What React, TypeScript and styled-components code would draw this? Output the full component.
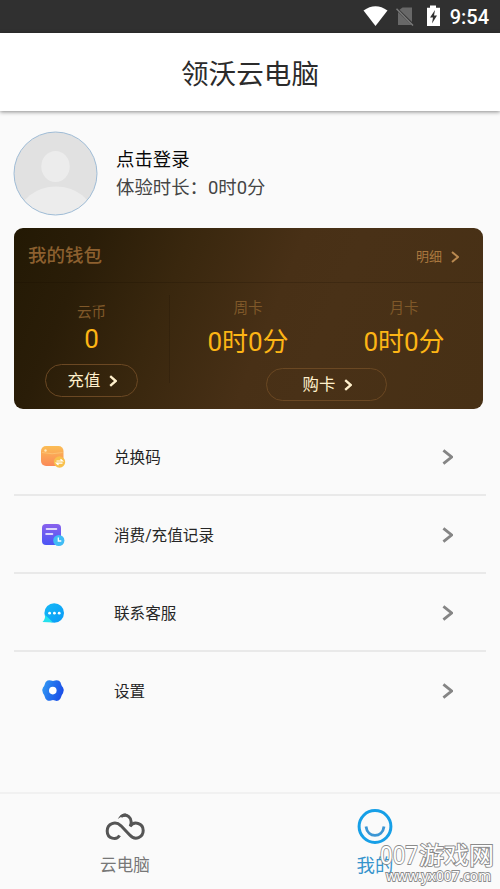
import React from "react";
import styled, { createGlobalStyle } from "styled-components";

const GlobalStyle = createGlobalStyle`
  * { box-sizing: border-box; }
  body { margin: 0; background: #fafafa; }
`;

const Screen = styled.div`
  width: 500px;
  height: 889px;
  display: flex;
  flex-direction: column;
  position: relative;
  overflow: hidden;
  background: #fafafa;
  color: #222;
  font-family: Roboto, "Noto Sans CJK SC", sans-serif;
  svg { display: block; flex: none; }
`;

const StatusBar = styled.div`
  height: 33px;
  flex: none;
  display: flex;
  align-items: center;
  justify-content: flex-end;
  padding-right: 11px;
  background: #303030;
  color: #fff;
`;

const Clock = styled.span`
  font-size: 20px;
  line-height: 33px;
  font-weight: 500;
  padding-top: 2px;
  margin-left: 10px;
`;

const TitleBar = styled.header`
  height: 78px;
  flex: none;
  background: #fff;
  box-shadow: 0 1px 4px rgba(0, 0, 0, 0.45);
  text-align: center;
  font-size: 27.6px;
  line-height: 83px;
  color: #2b2b2b;
  z-index: 1;
`;

const Profile = styled.section`
  height: 117px;
  flex: none;
  display: flex;
  align-items: center;
  gap: 18px;
  padding: 8px 14px 0 13px;
`;

const ProfileText = styled.div`
  display: flex;
  flex-direction: column;
`;

const ProfileLine = styled.span<{ $muted?: boolean }>`
  font-size: 18.4px;
  line-height: 28px;
  color: ${(p) => (p.$muted ? "#454545" : "#080808")};
`;

const Wallet = styled.section`
  width: 469px;
  height: 181px;
  flex: none;
  margin-left: 14px;
  border-radius: 9px;
  background: linear-gradient(112deg, #231904 0%, #2a1d08 15%, #39270e 33%, #483016 54%, #493117 65%, #473015 100%);
  overflow: hidden;
`;

const WalletHeader = styled.div`
  height: 55px;
  display: flex;
  align-items: center;
  justify-content: space-between;
  padding: 1px 24px 0 14px;
  border-bottom: 1px solid rgba(20, 10, 0, 0.2);
`;

const WalletTitle = styled.h2`
  margin: 0;
  font-size: 18.5px;
  line-height: 28px;
  font-weight: 500;
  color: #8c602f;
`;

const DetailLink = styled.a`
  display: flex;
  align-items: center;
  gap: 9px;
  padding-top: 2px;
  font-size: 13px;
  line-height: 20px;
  color: #a9773e;
`;

const WalletBody = styled.div`
  height: 126px;
  display: grid;
  grid-template-columns: 156px 313px;
`;

const CoinSide = styled.div`
  display: flex;
  flex-direction: column;
  align-items: center;
  padding: 18px 1px 0 0;
  background: linear-gradient(rgba(20, 10, 0, 0.2), rgba(20, 10, 0, 0.2)) right 12px / 1px 88px no-repeat;
`;

const CardSide = styled.div`
  display: flex;
  flex-direction: column;
  align-items: center;
  padding-top: 14px;
`;

const CardPair = styled.div`
  width: 312px;
  align-self: flex-start;
  display: grid;
  grid-template-columns: 1fr 1fr;
`;

const Stat = styled.div`
  display: flex;
  flex-direction: column;
  align-items: center;
`;

const StatLabel = styled.span`
  font-size: 14.6px;
  line-height: 22px;
  color: #7f5829;
`;

const StatValue = styled.span<{ $tall?: boolean }>`
  font-size: 26px;
  line-height: ${(p) => (p.$tall ? 46 : 33)}px;
  color: #fdb515;
`;

const PillButton = styled.button<{ $width: number; $top: number }>`
  width: ${(p) => p.$width}px;
  height: 33px;
  margin: ${(p) => p.$top}px 0 0;
  padding: 1px 0 0 2px;
  display: flex;
  align-items: center;
  justify-content: center;
  gap: 9px;
  border: 1px solid #6b4823;
  border-radius: 17px;
  background: transparent;
  color: #fff0cc;
  font: inherit;
  font-size: 16.4px;
  line-height: 24px;
`;

const Menu = styled.nav`
  flex: 1;
  padding: 9px 14px 0;
`;

const MenuRow = styled.div<{ $last?: boolean }>`
  height: 78px;
  display: grid;
  grid-template-columns: 100px 1fr 11px;
  align-items: center;
  padding: 1px 33px 0 0;
  border-bottom: 2px solid ${(p) => (p.$last ? "transparent" : "#e9e9e9")};
  font-size: 15.6px;
  line-height: 24px;
  color: #262626;
`;

const MenuLabel = styled.span`
  padding-top: 3px;
`;

const IconCell = styled.span`
  padding-left: 26px;
`;

const TabBar = styled.footer`
  height: 97px;
  flex: none;
  display: grid;
  grid-template-columns: 1fr 1fr;
  border-top: 2px solid #f1f1f1;
`;

const Tab = styled.div<{ $active?: boolean }>`
  display: flex;
  flex-direction: column;
  align-items: center;
  padding-top: 13px;
  font-size: ${(p) => (p.$active ? 18.4 : 16.6)}px;
  line-height: 24px;
  color: ${(p) => (p.$active ? "#3593cc" : "#777")};
`;

const TabIcon = styled.span`
  height: 40px;
  display: flex;
  align-items: center;
  margin-bottom: 7px;
`;

const Watermark = styled.svg`
  position: absolute;
  left: 370px;
  top: 836px;
`;

function Chevron({ w, h, color, stroke }: { w: number; h: number; color: string; stroke: number }) {
  const m = stroke / 2;
  return (
    <svg width={w} height={h}>
      <path d={`M${m} ${m}L${w - m} ${h / 2}L${m} ${h - m}`} fill="none" stroke={color} strokeWidth={stroke} />
    </svg>
  );
}

function StatusIcons() {
  return (
    <svg width="80" height="33" viewBox="360 0 80 33">
      <path d="M363.5 10.5Q375.5 2 387.5 10.5L375.5 26Z" fill="#fff" />
      <path d="M402.5 7.5H412V22L399.5 9.8Z M398 12V25H411.5Z" fill="#686868" />
      <path d="M396.5 8.8L413 25.5" stroke="#7b7b7b" strokeWidth="1.5" />
      <path d="M430 5.5h6v2.3h4V26h-13V7.8h3Z" fill="#fff" />
      <path d="M435 10L430 17.5h3L432 23.5L437 15.5h-3Z" fill="#303030" />
    </svg>
  );
}

function Avatar() {
  return (
    <svg width="85" height="85" viewBox="0 0 85 85">
      <defs>
        <clipPath id="avatarClip">
          <circle cx="42.5" cy="42.5" r="41.5" />
        </clipPath>
      </defs>
      <g clipPath="url(#avatarClip)">
        <rect width="85" height="85" fill="#e1e1e1" />
        <ellipse cx="42.5" cy="35.5" rx="14.2" ry="15.5" fill="#ececec" />
        <ellipse cx="43" cy="85" rx="37" ry="29.5" fill="#ececec" />
      </g>
      <circle cx="42.5" cy="42.5" r="41.5" fill="none" stroke="#9fbcd6" strokeWidth="1" />
    </svg>
  );
}

function RedeemIcon() {
  return (
    <svg width="26" height="26" viewBox="0 0 26 26">
      <defs>
        <linearGradient id="redeem" x1="0" y1="0" x2="0" y2="1">
          <stop offset="0" stopColor="#fbbd55" />
          <stop offset="1" stopColor="#fb8958" />
        </linearGradient>
      </defs>
      <rect x="1" y="2" width="22.5" height="20" rx="5" fill="url(#redeem)" />
      <path d="M2 8.5Q12 11 22.5 8.5" fill="none" stroke="#fdc779" strokeWidth="0.8" />
      <circle cx="5.5" cy="6.5" r="1.2" fill="#ffe9bd" />
      <circle cx="19.5" cy="18" r="5.7" fill="#f8c04c" />
      <path d="M16.5 17h6l-2-1.8M22.5 19.2h-6l2 1.8" fill="none" stroke="#fff" strokeWidth="1.2" />
    </svg>
  );
}

function RecordIcon() {
  return (
    <svg width="26" height="26" viewBox="0 0 26 26">
      <defs>
        <linearGradient id="record" x1="0" y1="0" x2="0" y2="1">
          <stop offset="0" stopColor="#8861ed" />
          <stop offset="1" stopColor="#4b55f5" />
        </linearGradient>
      </defs>
      <rect x="2" y="2" width="19" height="21" rx="4" fill="url(#record)" />
      <path d="M6.5 7h10M6 12h6.5" stroke="#fff" strokeWidth="1.6" strokeLinecap="round" />
      <circle cx="18.8" cy="18.5" r="5.6" fill="#41bcf5" />
      <path d="M18.3 15.5v3.5h3" fill="none" stroke="#fff" strokeWidth="1.3" />
    </svg>
  );
}

function SupportIcon() {
  return (
    <svg width="26" height="26" viewBox="0 0 26 26">
      <defs>
        <linearGradient id="support" x1="0" y1="0" x2="1" y2="1">
          <stop offset="0" stopColor="#16b9f5" />
          <stop offset="1" stopColor="#0999f8" />
        </linearGradient>
      </defs>
      <circle cx="14.2" cy="13" r="9.8" fill="url(#support)" />
      <path d="M5 15Q9 18 13 22.4L2.5 22Q5.5 19 5 15Z" fill="#25e0ed" />
      <circle cx="9.6" cy="13.2" r="1.4" fill="#fff" />
      <circle cx="14.4" cy="13.2" r="1.4" fill="#fff" />
      <circle cx="19.2" cy="13.2" r="1.4" fill="#fff" />
    </svg>
  );
}

function SettingsIcon() {
  return (
    <svg width="26" height="26" viewBox="0 0 26 26">
      <defs>
        <linearGradient id="settings" x1="0" y1="0" x2="1" y2="0.3">
          <stop offset="0" stopColor="#35a0f5" />
          <stop offset="0.5" stopColor="#2474ed" />
          <stop offset="1" stopColor="#1c51e8" />
        </linearGradient>
      </defs>
      <path
        d="M7.5 2.6Q9.5 1.8 11 2.6Q13 3.4 15 2.6Q17 1.8 19 2.8Q20.8 4 21.2 6.5Q21.6 8 23 9.5Q24.8 12.3 23 15.2Q21.6 17 21.2 18.8Q20.5 21.5 18.5 22.5Q16.5 23.3 15 22.5Q13 21.7 11 22.5Q9 23.3 7 22.3Q5.2 21 4.8 18.8Q4.4 17 3 15.2Q1.2 12.3 3 9.5Q4.4 8 4.8 6.3Q5.2 3.7 7.5 2.6Z"
        fill="url(#settings)"
      />
      <circle cx="12.8" cy="12.6" r="3.8" fill="#fff" />
    </svg>
  );
}

const menuItems = [
  { label: "兑换码", icon: <RedeemIcon /> },
  { label: "消费/充值记录", icon: <RecordIcon /> },
  { label: "联系客服", icon: <SupportIcon /> },
  { label: "设置", icon: <SettingsIcon /> },
];

function CloudIcon() {
  return (
    <svg width="42" height="28" viewBox="104 812 42 28">
      <g fill="none" stroke="#555" strokeWidth="3">
        <path d="M119.6 834.5C116.5 839.5 107.2 838 107.2 830C107.2 822.5 115.5 819.5 121 824.8L129.5 833.8C135.5 840.5 143.2 836 143.2 829.5C143.2 822 134 819.5 130 825.5" />
        <path d="M121 815.6C126 811.8 133.5 816.5 130.4 825" />
      </g>
      <path d="M117.8 818Q120.5 812.5 126 812.5L125 815.8Q120.5 815.3 117.8 818Z" fill="#555" />
    </svg>
  );
}

function SmileIcon() {
  return (
    <svg width="36" height="36" viewBox="0 0 36 36">
      <circle cx="18" cy="17.5" r="15.9" fill="none" stroke="#169fe7" strokeWidth="3" />
      <path d="M9 17.5C10.5 29.3 25.5 29.3 27 17.5" fill="none" stroke="#3c96d4" strokeWidth="2.8" />
    </svg>
  );
}

export default function App() {
  return (
    <>
      <GlobalStyle />
      <Screen>
        <StatusBar>
          <StatusIcons />
          <Clock>9:54</Clock>
        </StatusBar>
        <TitleBar>领沃云电脑</TitleBar>
        <Profile>
          <Avatar />
          <ProfileText>
            <ProfileLine>点击登录</ProfileLine>
            <ProfileLine $muted>体验时长：0时0分</ProfileLine>
          </ProfileText>
        </Profile>
        <Wallet>
          <WalletHeader>
            <WalletTitle>我的钱包</WalletTitle>
            <DetailLink>
              明细
              <Chevron w={8} h={12} color="#b98950" stroke={2} />
            </DetailLink>
          </WalletHeader>
          <WalletBody>
            <CoinSide>
              <StatLabel>云币</StatLabel>
              <StatValue>0</StatValue>
              <PillButton $width={93} $top={8}>
                充值
                <Chevron w={8} h={12} color="#fff0cc" stroke={2.4} />
              </PillButton>
            </CoinSide>
            <CardSide>
              <CardPair>
                <Stat>
                  <StatLabel>周卡</StatLabel>
                  <StatValue $tall>0时0分</StatValue>
                </Stat>
                <Stat>
                  <StatLabel>月卡</StatLabel>
                  <StatValue $tall>0时0分</StatValue>
                </Stat>
              </CardPair>
              <PillButton $width={121} $top={3}>
                购卡
                <Chevron w={8} h={12} color="#fff0cc" stroke={2.4} />
              </PillButton>
            </CardSide>
          </WalletBody>
        </Wallet>
        <Menu>
          {menuItems.map((item, i) => (
            <MenuRow key={item.label} $last={i === menuItems.length - 1}>
              <IconCell>{item.icon}</IconCell>
              <MenuLabel>{item.label}</MenuLabel>
              <Chevron w={11} h={16} color="#858585" stroke={2.8} />
            </MenuRow>
          ))}
        </Menu>
        <TabBar>
          <Tab>
            <TabIcon>
              <CloudIcon />
            </TabIcon>
            云电脑
          </Tab>
          <Tab $active>
            <TabIcon>
              <SmileIcon />
            </TabIcon>
            我的
          </Tab>
        </TabBar>
        <Watermark width="130" height="53" fill="#fff" stroke="#8b8b8b" strokeWidth="1.8" paintOrder="stroke" fontFamily='"Noto Sans", "Noto Sans CJK SC", sans-serif'>
          <text x="10" y="28" fontSize="26" textLength="38" lengthAdjust="spacingAndGlyphs">007</text>
          <text x="49" y="28" fontSize="24" textLength="75" lengthAdjust="spacingAndGlyphs">游戏网</text>
          <text x="16" y="45" fontSize="14" textLength="105" lengthAdjust="spacingAndGlyphs">www.yx007.com</text>
        </Watermark>
      </Screen>
    </>
  );
}
